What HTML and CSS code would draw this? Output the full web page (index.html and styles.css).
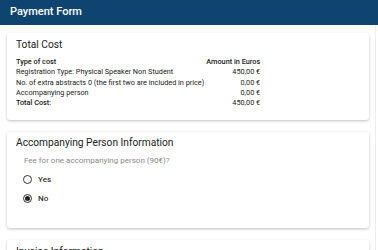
FILE: index.html
```html
<!DOCTYPE html>
<html lang="en">
<head>
    <meta charset="UTF-8">
    <meta name="viewport" content="width=device-width, initial-scale=1.0">
    <title>Payment Form</title>
    <link rel="stylesheet" href="styles.css">
</head>
<body>

    <div class="toolbar">Payment Form</div>

    <div class="content">
        <div class="card">
            <h2>Total Cost</h2>
            <table class="cost-table">
                <tr>
                    <th>Type of cost</th>
                    <th class="amount">Amount in Euros</th>
                </tr>
                <tr>
                    <td>Registration Type: Physical Speaker Non Student</td>
                    <td class="amount">450,00 €</td>
                </tr>
                <tr>
                    <td>No. of extra abstracts 0 (the first two are included in price)</td>
                    <td class="amount">0,00 €</td>
                </tr>
                <tr>
                    <td>Accompanying person</td>
                    <td class="amount">0,00 €</td>
                </tr>
                <tr>
                    <th>Total Cost:</th>
                    <td class="amount">450,00 €</td>
                </tr>
            </table>
        </div>

        <div class="card radio-card">
            <h2>Accompanying Person Information</h2>
            <p class="question">Fee for one accompanying person (90€)?</p>
            <div class="radio-group">
                <label class="radio"><span class="circle"></span>Yes</label>
                <label class="radio checked"><span class="circle"></span>No</label>
            </div>
        </div>

        <div class="card">
            <h2>Invoice Information</h2>
        </div>
    </div>

</body>
</html>
```

FILE: styles.css
```css
* {
    margin: 0;
    padding: 0;
    box-sizing: border-box;
}

body {
    font-family: Roboto, "Liberation Sans", sans-serif;
    background-color: #fff;
    color: #212121;
    height: 250px;
    overflow: hidden;
}

.toolbar {
    height: 25px;
    background-color: #0f4470;
    color: #fff;
    font-size: 11px;
    font-weight: 500;
    line-height: 23px;
    padding-left: 10px;
}

.content {
    width: 376px;
    border-right: 1px solid #eee;
    padding: 8px 6px 8px 7px;
    display: flex;
    flex-direction: column;
    gap: 12px;
}

.card {
    background-color: #fff;
    border-radius: 3px;
    box-shadow: 0 1px 3px rgba(0, 0, 0, 0.25);
    padding: 6px 9px 12px;
}

.card h2 {
    font-size: 10.2px;
    font-weight: 400;
    line-height: 12px;
    margin-bottom: 6px;
}

/* Cost table */
.cost-table {
    border-collapse: collapse;
    font-size: 7.3px;
    line-height: 10.3px;
}

.cost-table th,
.cost-table td {
    padding: 0;
    text-align: left;
    white-space: nowrap;
}

.cost-table th {
    font-weight: 500;
}

.cost-table .amount {
    text-align: right;
    padding-left: 2px;
}

/* Radio questions */
.radio-card {
    padding-top: 5px;
    padding-bottom: 25px;
}

.radio-card h2 {
    margin-bottom: 7px;
}

.question {
    font-size: 8px;
    line-height: 10px;
    color: #8a8a8a;
    padding-left: 8px;
    margin-bottom: 8px;
}

.radio-group {
    display: flex;
    flex-direction: column;
    gap: 9px;
    padding-left: 7px;
}

.radio {
    display: flex;
    align-items: center;
    gap: 6px;
    height: 10px;
    font-size: 8px;
    font-weight: 500;
    color: #333;
}

.radio .circle {
    width: 9px;
    height: 9px;
    border: 1px solid #333;
    border-radius: 50%;
    display: flex;
    align-items: center;
    justify-content: center;
}

.radio.checked .circle::after {
    content: "";
    width: 5px;
    height: 5px;
    border-radius: 50%;
    background-color: #222;
}
```
